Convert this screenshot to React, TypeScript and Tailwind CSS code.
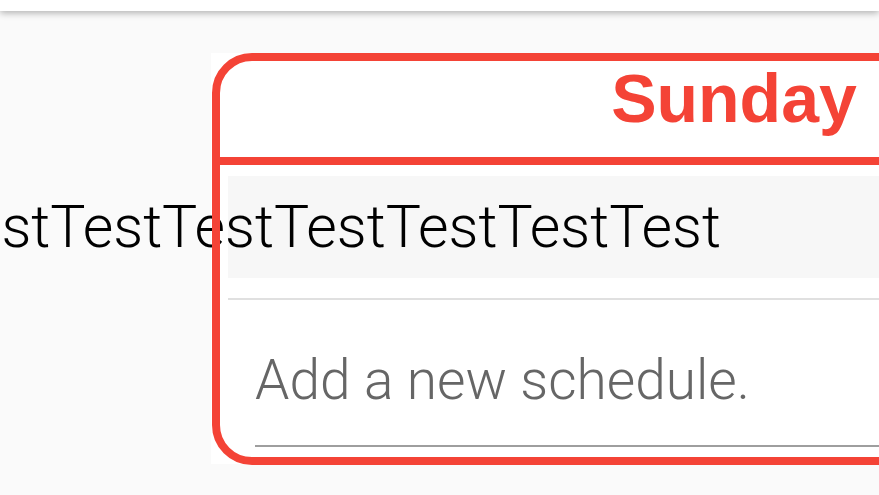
import React from "react";

export default function App() {
  return (
    <div
      className="relative w-[879px] h-[495px] overflow-hidden bg-[#fafafa]"
      style={{ fontFamily: "Roboto, 'Liberation Sans', sans-serif" }}
    >
      <div className="relative z-20 h-[11px] bg-white shadow-[0_2px_7px_rgba(0,0,0,0.3)]" />
      <div className="pl-[211px] pt-[41px]">
        <div className="w-[1100px] h-[411px] bg-white">
          <div className="relative ml-[1px] mt-[1px] w-[1044px] h-[412px] p-[8px] flex flex-col">
            <div className="h-[104px] pb-[23px] border-b-[8px] border-[#f44336] flex items-center justify-center">
              <span
                className="text-[68px] leading-none font-bold text-[#f44336]"
                style={{ fontFamily: "'Liberation Sans', Arial, sans-serif" }}
              >
                Sunday
              </span>
            </div>
            <div className="px-[8px] pt-[11px] flex flex-col">
              <div className="h-[102px] bg-[#f7f7f7] flex items-center pb-[2px]">
                <div className="w-[493px] flex justify-end">
                  <span className="whitespace-nowrap text-[59px] leading-none font-light text-black">
                    TestTestTestTestTestTestTestTest
                  </span>
                </div>
              </div>
              <div className="mt-[20px] h-[2px] bg-[#e0e0e0]" />
              <div className="ml-[27px] mt-[53px] pb-[37px] border-b-2 border-[#9e9e9e]">
                <span className="block text-[55px] leading-none font-light text-[#666666]">
                  Add a new schedule.
                </span>
              </div>
            </div>
            <div className="pointer-events-none absolute inset-0 z-10 rounded-[40px] border-[8px] border-[#f44336]" />
          </div>
        </div>
      </div>
    </div>
  );
}
